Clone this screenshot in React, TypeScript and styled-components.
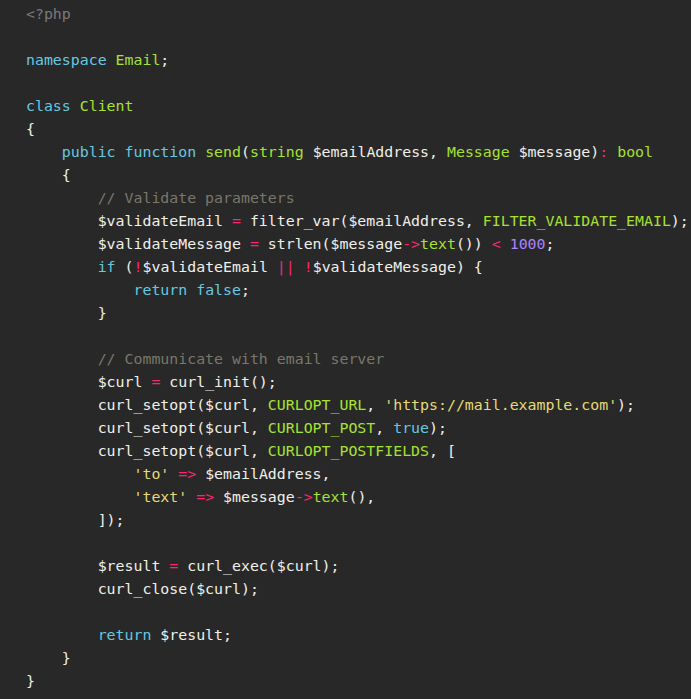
import React from "react";
import styled, { createGlobalStyle } from "styled-components";

const Global = createGlobalStyle`
  html, body {
    margin: 0;
    padding: 0;
    background: #282828;
  }
`;

type Kind = "p" | "k" | "g" | "o" | "n" | "s" | "c" | "m";

const colors: Record<Kind, string> = {
  p: "#f0f0ea",
  k: "#66c8e0",
  g: "#a6e22e",
  o: "#f92672",
  n: "#ae81ff",
  s: "#e6db74",
  c: "#7a776a",
  m: "#7a7a7a",
};

const CodeBlock = styled.pre`
  margin: 0;
  padding: 3px 0 6px 26px;
  min-height: 699px;
  box-sizing: border-box;
  background: #282828;
  font-family: "DejaVu Sans Mono", "Liberation Mono", monospace;
  font-size: 14.88px;
  line-height: 23px;
  white-space: pre;
  color: #f0f0ea;
  overflow: hidden;
`;

const Line = styled.div`
  height: 23px;
`;

const Token = styled.span<{ $kind: Kind }>`
  color: ${(p) => colors[p.$kind]};
`;

type Tok = [Kind, string];

const lines: Tok[][] = [
  [["m", "<?php"]],
  [],
  [["k", "namespace"], ["p", " "], ["g", "Email"], ["p", ";"]],
  [],
  [["k", "class"], ["p", " "], ["g", "Client"]],
  [["p", "{"]],
  [
    ["p", "    "], ["k", "public"], ["p", " "], ["k", "function"], ["p", " "], ["g", "send"], ["p", "("],
    ["g", "string"], ["p", " $emailAddress, "], ["g", "Message"], ["p", " $message)"], ["o", ":"], ["p", " "], ["g", "bool"],
  ],
  [["p", "    {"]],
  [["p", "        "], ["c", "// Validate parameters"]],
  [["p", "        $validateEmail "], ["o", "="], ["p", " filter_var($emailAddress, "], ["g", "FILTER_VALIDATE_EMAIL"], ["p", ");"]],
  [
    ["p", "        $validateMessage "], ["o", "="], ["p", " strlen($message"], ["o", "->"], ["g", "text"],
    ["p", "()) "], ["o", "<"], ["p", " "], ["n", "1000"], ["p", ";"],
  ],
  [
    ["p", "        "], ["k", "if"], ["p", " ("], ["o", "!"], ["p", "$validateEmail "], ["o", "||"], ["p", " "],
    ["o", "!"], ["p", "$validateMessage) {"],
  ],
  [["p", "            "], ["k", "return"], ["p", " "], ["k", "false"], ["p", ";"]],
  [["p", "        }"]],
  [],
  [["p", "        "], ["c", "// Communicate with email server"]],
  [["p", "        $curl "], ["o", "="], ["p", " curl_init();"]],
  [["p", "        curl_setopt($curl, "], ["g", "CURLOPT_URL"], ["p", ", "], ["s", "'https://mail.example.com'"], ["p", ");"]],
  [["p", "        curl_setopt($curl, "], ["g", "CURLOPT_POST"], ["p", ", "], ["k", "true"], ["p", ");"]],
  [["p", "        curl_setopt($curl, "], ["g", "CURLOPT_POSTFIELDS"], ["p", ", ["]],
  [["p", "            "], ["s", "'to'"], ["p", " "], ["o", "=>"], ["p", " $emailAddress,"]],
  [["p", "            "], ["s", "'text'"], ["p", " "], ["o", "=>"], ["p", " $message"], ["o", "->"], ["g", "text"], ["p", "(),"]],
  [["p", "        ]);"]],
  [],
  [["p", "        $result "], ["o", "="], ["p", " curl_exec($curl);"]],
  [["p", "        curl_close($curl);"]],
  [],
  [["p", "        "], ["k", "return"], ["p", " $result;"]],
  [["p", "    }"]],
  [["p", "}"]],
];

export default function App() {
  return (
    <>
      <Global />
      <CodeBlock>
        {lines.map((toks, i) => (
          <Line key={i}>
            {toks.map(([kind, text], j) => (
              <Token key={j} $kind={kind}>
                {text}
              </Token>
            ))}
          </Line>
        ))}
      </CodeBlock>
    </>
  );
}
